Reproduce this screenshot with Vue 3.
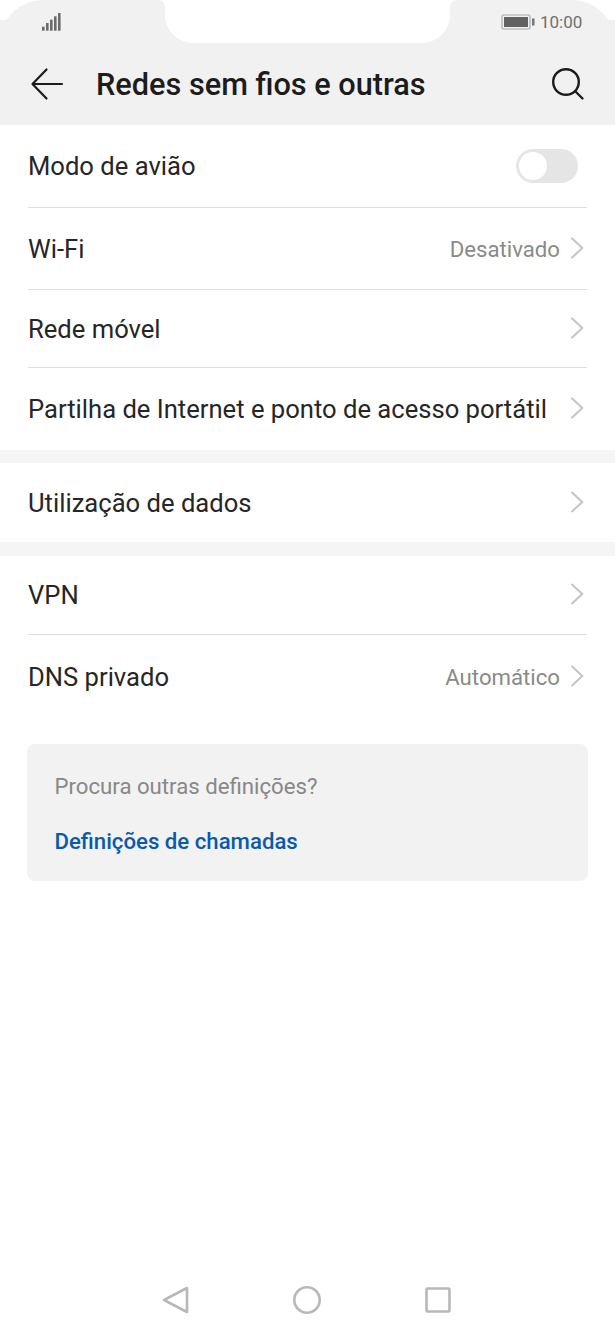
<template>
  <div class="screen">
    <header class="top">
      <div class="status">
        <div class="ear ear-left">
          <svg class="signal" width="20" height="18" viewBox="0 0 20 18">
            <rect v-for="bar in signalBars" :key="bar.x" :x="bar.x" :y="bar.y" width="2.6" :height="17.7 - bar.y" fill="#6c6c6c" />
          </svg>
        </div>
        <div class="notch"></div>
        <div class="ear ear-right">
          <svg class="battery" width="34" height="16" viewBox="0 0 34 16">
            <rect x="1" y="1" width="28" height="14" rx="1.5" fill="none" stroke="#a8a8a8" stroke-width="1.2" />
            <rect x="3" y="3" width="24" height="10" fill="#626262" />
            <rect x="31" y="4.5" width="2.5" height="7" fill="#777" />
          </svg>
          <span class="time">10:00</span>
        </div>
      </div>
      <div class="title-bar">
        <svg class="back" width="34" height="34" viewBox="0 0 34 34" fill="none" stroke="#1c1c1c" stroke-width="2.2" stroke-linecap="round" stroke-linejoin="round">
          <path d="M2.5 17H32M16.5 2.5L2.5 17L16.5 31.5" />
        </svg>
        <h1>Redes sem fios e outras</h1>
        <svg class="search" width="34" height="34" viewBox="0 0 34 34" fill="none" stroke="#1c1c1c" stroke-width="2.4" stroke-linecap="round">
          <circle cx="15" cy="15" r="12.8" />
          <path d="M24.5 24.5L31.5 31.5" />
        </svg>
      </div>
    </header>

    <section v-for="(group, g) in groups" :key="g" class="group">
      <div v-for="row in group" :key="row.label" class="row" :style="{ height: row.h + 'px' }">
        <span class="label">{{ row.label }}</span>
        <span v-if="row.value" class="value">{{ row.value }}</span>
        <div v-if="row.toggle" class="toggle"><div class="knob"></div></div>
        <svg v-else class="chevron" width="14" height="24" viewBox="0 0 14 24" fill="none" stroke="#c4c4c4" stroke-width="2">
          <path d="M1.5 2L12.3 12L1.5 22" />
        </svg>
      </div>
    </section>

    <div class="card">
      <div class="card-hint">Procura outras definições?</div>
      <div class="card-link">Definições de chamadas</div>
    </div>

    <nav class="nav">
      <svg width="30" height="30" viewBox="0 0 30 30" fill="none" stroke="#b8b8b8" stroke-width="2.6" stroke-linejoin="round">
        <path d="M26 3V27L3 15Z" />
      </svg>
      <svg width="30" height="30" viewBox="0 0 30 30" fill="none" stroke="#b8b8b8" stroke-width="2.6">
        <circle cx="15" cy="15" r="12.7" />
      </svg>
      <svg width="30" height="30" viewBox="0 0 30 30" fill="none" stroke="#b8b8b8" stroke-width="2.6" stroke-linejoin="round">
        <rect x="3.5" y="3.5" width="23" height="23" rx="1" />
      </svg>
    </nav>
  </div>
</template>

<script setup>
const signalBars = [
  { x: 0, y: 13.7 },
  { x: 4, y: 10 },
  { x: 8, y: 6.7 },
  { x: 12, y: 3.3 },
  { x: 16, y: 0 }
]

const groups = [
  [
    { label: 'Modo de avião', toggle: true, h: 83 },
    { label: 'Wi-Fi', value: 'Desativado', h: 82 },
    { label: 'Rede móvel', h: 78 },
    { label: 'Partilha de Internet e ponto de acesso portátil', h: 82 }
  ],
  [{ label: 'Utilização de dados', h: 79 }],
  [
    { label: 'VPN', h: 79 },
    { label: 'DNS privado', value: 'Automático', h: 83 }
  ]
]
</script>

<style>
html,
body {
  background: #fff;
}
</style>

<style scoped>
.screen {
  position: relative;
  width: 615px;
  height: 1334px;
  overflow: hidden;
  background: #fff;
  font-family: Roboto, "Noto Sans", sans-serif;
}

.status {
  display: flex;
  height: 43px;
  background: linear-gradient(#fff 20px, #f1f1f1 20px);
}

.ear {
  display: flex;
  align-items: center;
  background: #f1f1f1;
}

.ear-left {
  width: 165px;
  padding-left: 42px;
  box-sizing: border-box;
  border-radius: 52px 8px 0 0;
}

.ear-right {
  width: 165px;
  padding-left: 51px;
  box-sizing: border-box;
  border-radius: 8px 52px 0 0;
}

.notch {
  flex: 1;
  background: #fff;
  border-radius: 0 0 28px 28px;
}

.time {
  margin-left: 5px;
  font-size: 17px;
  color: #707070;
}

.title-bar {
  display: flex;
  align-items: center;
  height: 82px;
  padding: 0 30px 1px 30px;
  box-sizing: border-box;
  background: #f1f1f1;
}

.title-bar h1 {
  flex: 1;
  margin: 0 0 0 32px;
  padding-top: 2px;
  font-size: 30.7px;
  font-weight: 500;
  color: #1c1c1c;
}

.group {
  padding: 0 28px;
  border-bottom: 13px solid #f5f5f5;
}

.group:nth-of-type(2) {
  border-bottom-width: 14px;
}

.group:nth-of-type(3) {
  border-bottom: 0;
}

.row {
  display: flex;
  align-items: center;
  box-sizing: border-box;
  border-bottom: 1px solid #dedede;
}

.row:last-child {
  border-bottom: 0;
}

.label {
  flex: 1;
  font-size: 25.6px;
  color: #262626;
  white-space: nowrap;
}

.value {
  margin-right: 10px;
  font-size: 22.2px;
  color: #8a8a8a;
}

.chevron {
  margin-right: 3px;
  margin-bottom: 2px;
}

.toggle {
  width: 62px;
  height: 34px;
  margin-right: 9px;
  padding: 2px;
  box-sizing: border-box;
  border-radius: 17px;
  background: #e5e5e5;
}

.knob {
  width: 28px;
  height: 28px;
  margin: 1px;
  border-radius: 50%;
  background: #fff;
}

.card {
  margin: 26px 27px 0;
  height: 137px;
  padding: 29px 27.5px 0;
  box-sizing: border-box;
  border-radius: 8px;
  background: #f2f2f2;
}

.card-hint {
  font-size: 22.2px;
  color: #888;
}

.card-link {
  margin-top: 29px;
  font-size: 22.2px;
  font-weight: 500;
  color: #0a59ab;
}

.nav {
  position: absolute;
  left: 161px;
  bottom: 19.5px;
  display: flex;
  gap: 101px;
}
</style>
